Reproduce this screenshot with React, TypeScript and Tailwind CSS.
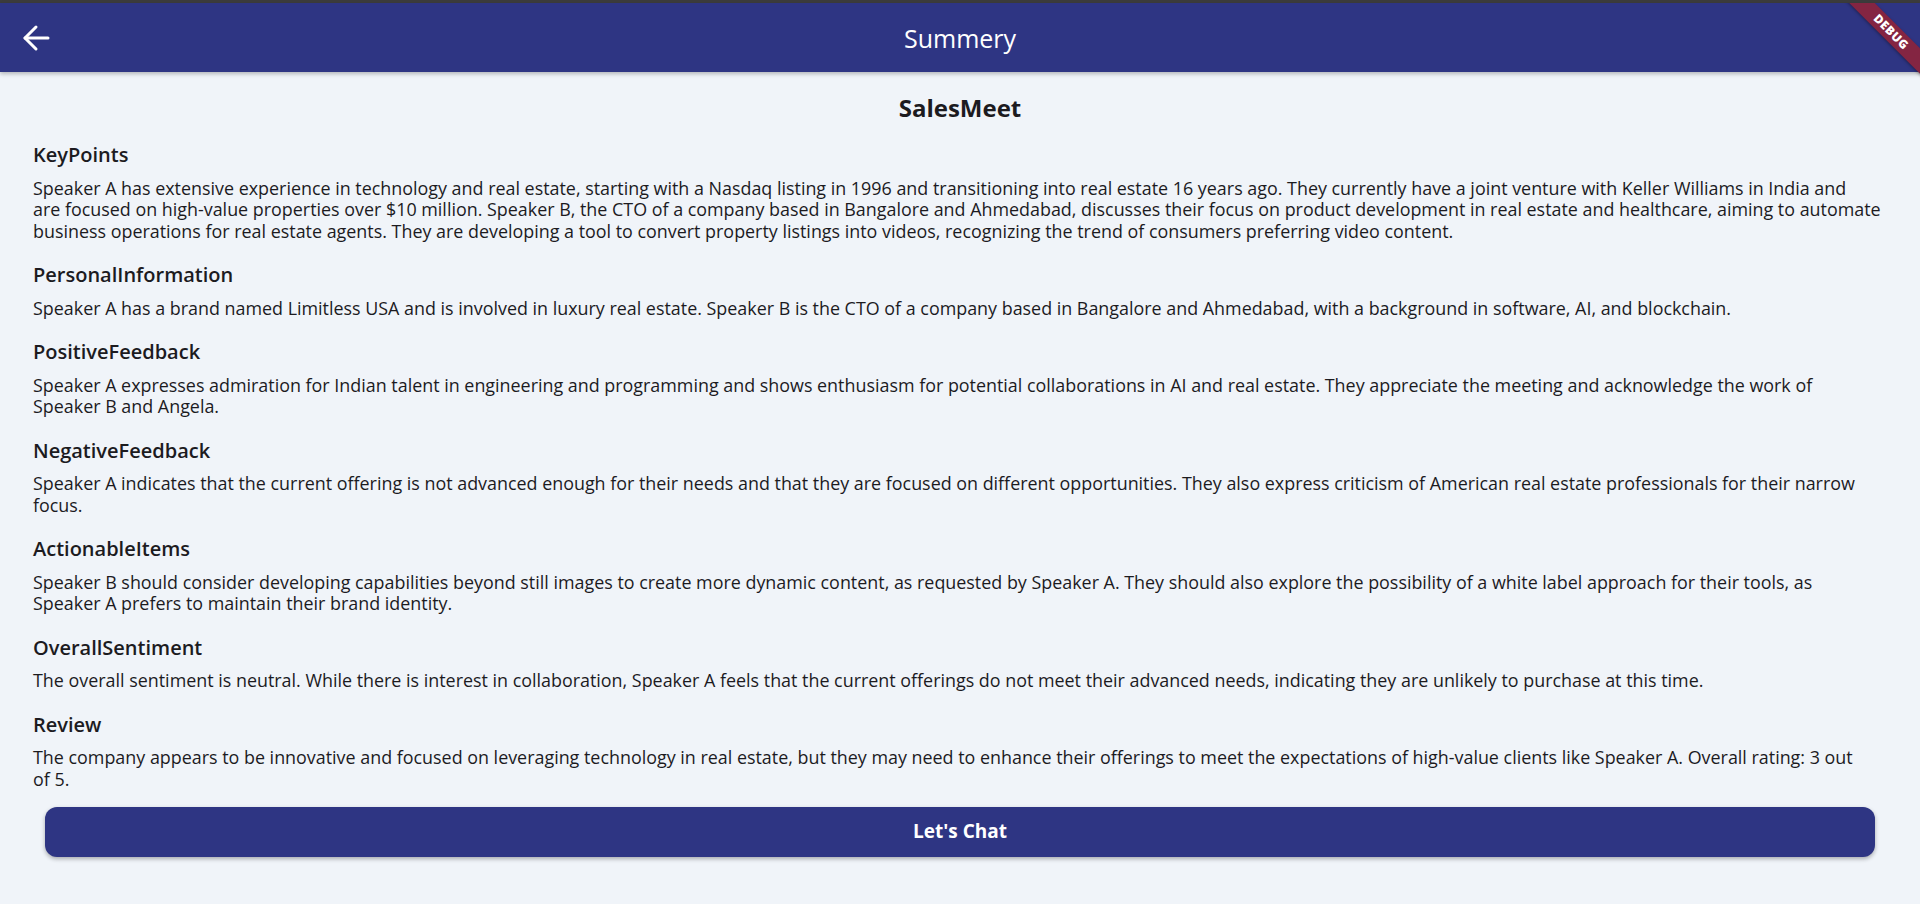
import React from "react";

// lines broken where the reference breaks them
const sections = [
  {
    title: "KeyPoints",
    lines: [
      "Speaker A has extensive experience in technology and real estate, starting with a Nasdaq listing in 1996 and transitioning into real estate 16 years ago. They currently have a joint venture with Keller Williams in India and",
      "are focused on high-value properties over $10 million. Speaker B, the CTO of a company based in Bangalore and Ahmedabad, discusses their focus on product development in real estate and healthcare, aiming to automate",
      "business operations for real estate agents. They are developing a tool to convert property listings into videos, recognizing the trend of consumers preferring video content.",
    ],
  },
  {
    title: "PersonalInformation",
    lines: [
      "Speaker A has a brand named Limitless USA and is involved in luxury real estate. Speaker B is the CTO of a company based in Bangalore and Ahmedabad, with a background in software, AI, and blockchain.",
    ],
  },
  {
    title: "PositiveFeedback",
    lines: [
      "Speaker A expresses admiration for Indian talent in engineering and programming and shows enthusiasm for potential collaborations in AI and real estate. They appreciate the meeting and acknowledge the work of",
      "Speaker B and Angela.",
    ],
  },
  {
    title: "NegativeFeedback",
    lines: [
      "Speaker A indicates that the current offering is not advanced enough for their needs and that they are focused on different opportunities. They also express criticism of American real estate professionals for their narrow",
      "focus.",
    ],
  },
  {
    title: "ActionableItems",
    lines: [
      "Speaker B should consider developing capabilities beyond still images to create more dynamic content, as requested by Speaker A. They should also explore the possibility of a white label approach for their tools, as",
      "Speaker A prefers to maintain their brand identity.",
    ],
  },
  {
    title: "OverallSentiment",
    lines: [
      "The overall sentiment is neutral. While there is interest in collaboration, Speaker A feels that the current offerings do not meet their advanced needs, indicating they are unlikely to purchase at this time.",
    ],
  },
  {
    title: "Review",
    lines: [
      "The company appears to be innovative and focused on leveraging technology in real estate, but they may need to enhance their offerings to meet the expectations of high-value clients like Speaker A. Overall rating: 3 out",
      "of 5.",
    ],
  },
];

function BackArrow() {
  return (
    <svg width="28" height="28" viewBox="0 0 28 28" fill="none" stroke="white" strokeWidth="3" strokeLinecap="round" strokeLinejoin="round">
      <path d="M3 14H26" />
      <path d="M14 3L3 14L14 25" />
    </svg>
  );
}

function DebugBanner() {
  return (
    <div className="pointer-events-none absolute right-0 top-[3px] z-20 h-[110px] w-[120px] overflow-hidden">
      <div className="absolute left-[31px] top-[20px] flex h-[18px] w-[120px] rotate-45 items-center justify-center bg-[#842542] shadow-[0_1px_3px_rgba(0,0,0,0.35)]">
        <span className="font-['Open_Sans',sans-serif] text-[12px] font-extrabold leading-none tracking-[0.5px] text-white">
          DEBUG
        </span>
      </div>
    </div>
  );
}

export default function App() {
  return (
    <div className="relative min-h-screen overflow-hidden bg-[#f0f4f9] font-['Open_Sans',sans-serif] text-[#1c1b1f]">
      <div className="h-[3px] bg-[#3c3c3c]" />
      <header className="relative z-10 flex h-[69px] items-center bg-[#2e3583] shadow-[0_2px_4px_rgba(0,0,0,0.25)]">
        <button className="ml-[22px] flex h-[28px] w-[28px] items-center justify-center">
          <BackArrow />
        </button>
        <h1 className="absolute left-1/2 -translate-x-1/2 text-[25px] leading-[30px] text-white">Summery</h1>
      </header>
      <DebugBanner />

      <main className="px-[33px] pt-[21px]">
        <h2 className="text-center text-[24px] font-bold leading-[30px]">SalesMeet</h2>
        <div className="mt-5 flex flex-col gap-[21px]">
          {sections.map((s) => (
            <section key={s.title}>
              <h3 className="text-[20px] font-semibold leading-[24px]">{s.title}</h3>
              <p className="mt-[10.5px] text-[17.9px] leading-[21.5px]">
                {s.lines.map((l, i) => (
                  <React.Fragment key={i}>
                    {i > 0 && <br />}
                    {l}
                  </React.Fragment>
                ))}
              </p>
            </section>
          ))}
        </div>
        <button className="mx-[12px] mt-[16.5px] flex h-[50px] w-[calc(100%-24px)] items-center justify-center rounded-[12px] bg-[#2e3583] text-[19px] font-bold text-white shadow-[0_2px_4px_rgba(0,0,0,0.3)]">
          Let's Chat
        </button>
      </main>
    </div>
  );
}
